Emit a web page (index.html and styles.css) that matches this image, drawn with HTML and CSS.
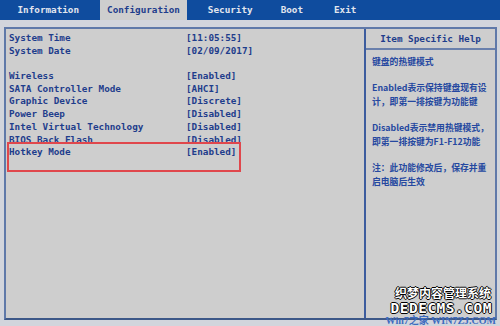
FILE: index.html
```html
<!DOCTYPE html>
<html lang="zh-CN">
<head>
    <meta charset="UTF-8">
    <meta name="viewport" content="width=device-width, initial-scale=1.0">
    <title>BIOS Configuration</title>
    <link rel="stylesheet" href="styles.css">
</head>
<body>
    <div class="tabs">
        <span class="tab">Information</span>
        <span class="tab active">Configuration</span>
        <span class="tab">Security</span>
        <span class="tab">Boot</span>
        <span class="tab exit">Exit</span>
    </div>

    <div class="frame">
        <div class="settings">
            <div class="row"><span class="label">System Time</span><span class="value">[11:05:55]</span></div>
            <div class="row"><span class="label">System Date</span><span class="value">[02/09/2017]</span></div>
            <div class="row"></div>
            <div class="row"><span class="label">Wireless</span><span class="value">[Enabled]</span></div>
            <div class="row"><span class="label">SATA Controller Mode</span><span class="value">[AHCI]</span></div>
            <div class="row"><span class="label">Graphic Device</span><span class="value">[Discrete]</span></div>
            <div class="row"><span class="label">Power Beep</span><span class="value">[Disabled]</span></div>
            <div class="row"><span class="label">Intel Virtual Technology</span><span class="value">[Disabled]</span></div>
            <div class="row"><span class="label">BIOS Back Flash</span><span class="value">[Disabled]</span></div>
            <div class="row"><span class="label">Hotkey Mode</span><span class="value">[Enabled]</span></div>
            <!-- red annotation box drawn over the list -->
            <div class="mark"></div>
        </div>

        <div class="help">
            <div class="help-title">Item Specific Help</div>
            <div class="help-body">
                <p>键盘的热键模式</p>
                <p>Enabled表示保持键盘现有设<br>计，即第一排按键为功能键</p>
                <p>Disabled表示禁用热键模式，<br>即第一排按键为F1-F12功能</p>
                <p>注：此功能修改后，保存并重<br>启电脑后生效</p>
            </div>
        </div>
    </div>

    <div class="watermark">
        <div class="wm-cn">织梦内容管理系统</div>
        <div class="wm-en">DEDECMS.COM</div>
        <div class="wm-site">Win7之家 WIN7ZJ.COM</div>
    </div>
</body>
</html>
```

FILE: styles.css
```css
body, html {
    margin: 0;
    padding: 0;
    height: 100%;
    overflow: hidden;
}

body {
    position: relative;
    background-color: #d2d5dc;
    color: #1e3d8c;
    font-family: "DejaVu Sans Mono", "Liberation Mono", monospace;
    font-size: 9.3px;
    font-weight: bold;
}

.tabs {
    display: flex;
    gap: 13px;
    height: 20px;
    padding-left: 10px;
    background-color: #0f4c9e;
}

.tab {
    padding: 0 7.5px;
    line-height: 19px;
    color: #e2e6ee;
}

.tab.active {
    background-color: #cecece;
    color: #1e3d8c;
}

.tab.exit {
    margin-left: 3px;
}

.frame {
    display: grid;
    grid-template-columns: 1fr 131px;
    box-sizing: border-box;
    height: 293px;
    margin: 7px 3px 0 4px;
    border: 2px solid #5f79a9;
    border-bottom-color: #3d5888;
    background-color: #cecece;
}

.settings {
    position: relative;
    padding: 3px 0 0 3px;
}

.row {
    display: flex;
    height: 12.7px;
    line-height: 12.7px;
    white-space: nowrap;
}

.label {
    width: 177px;
}

.mark {
    position: absolute;
    top: 113px;
    left: 1px;
    width: 230px;
    height: 26px;
    border: 2px solid #e0474c;
}

.help {
    border-left: 2px solid #3c5c9e;
}

.help-title {
    height: 19px;
    line-height: 19px;
    text-align: center;
    border-bottom: 2px solid #6a80ac;
}

.help-body {
    padding: 5px 0 0 6px;
    font-family: "Noto Sans CJK SC", "Noto Sans", sans-serif;
    font-size: 8.8px;
    line-height: 14px;
    color: #2548a0;
    white-space: nowrap;
}

.help-body p {
    margin: 0 0 12px;
}

.watermark {
    position: absolute;
    right: 8px;
    bottom: 0;
    text-align: right;
    font-weight: bold;
}

.wm-cn {
    font-family: "Noto Sans CJK SC", sans-serif;
    font-size: 12px;
    line-height: 15px;
    margin-right: 1px;
    color: #fff;
    text-shadow: 1px 0 0 #000, -1px 0 0 #000, 0 1px 0 #000, 0 -1px 0 #000;
}

.wm-en {
    font-family: "DejaVu Sans Mono", monospace;
    font-size: 14.5px;
    line-height: 16px;
    letter-spacing: 0.5px;
    color: #fff;
    text-shadow: 1px 0 0 #000, -1px 0 0 #000, 0 1px 0 #000, 0 -1px 0 #000;
}

.wm-site {
    margin-right: -4px;
    font-family: "Liberation Serif", "Noto Sans CJK SC", serif;
    font-size: 10px;
    line-height: 10px;
    color: #3d6cc0;
}
```
